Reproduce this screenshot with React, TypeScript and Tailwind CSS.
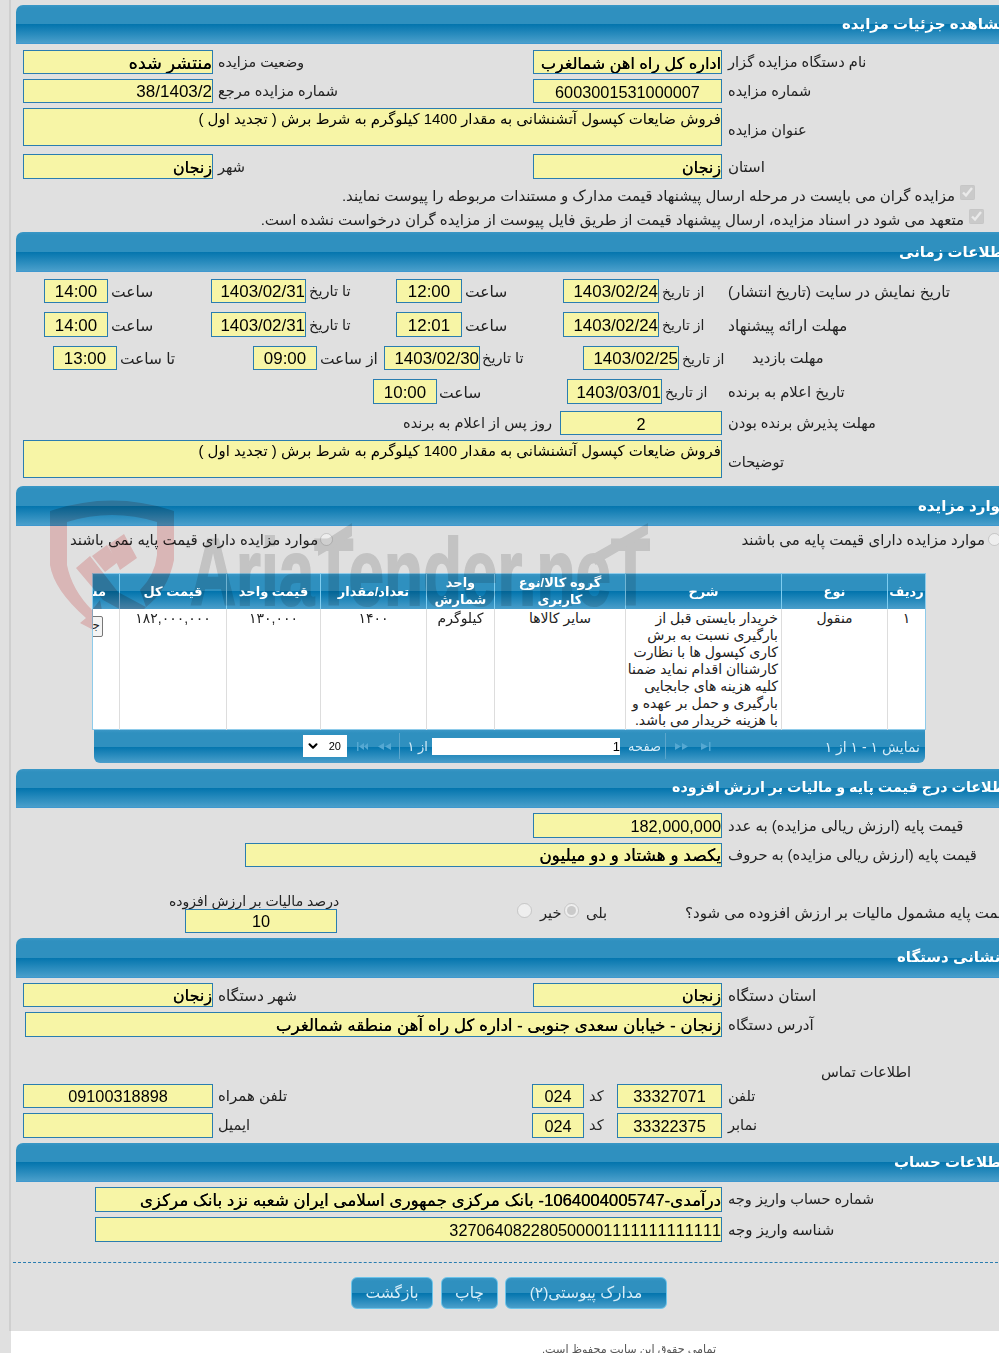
import React from "react";
import { ChevronDown } from "lucide-react";

const grad =
  "bg-[linear-gradient(to_bottom,#3a97c6_0px,#2f90bf_3px,#2f90bf_50%,#0274ad_50%,#4a9fcb_100%)]";

function Header({ title, offset, h = "h-[40px]", size = "text-[15px]" }: { title: string; offset: string; h?: string; size?: string }) {
  return (
    <div className={`${grad} ${h} w-[1100px] rounded-tl-[7px] flex items-center border-b border-[#3f98cf]`}>
      <div dir="rtl" className={`${offset} ${size} pt-[1px] relative z-20 text-white font-bold whitespace-nowrap`}>
        {title}
      </div>
    </div>
  );
}

function Box({ className = "", children, size = "text-[16.7px]" }: { className?: string; children?: React.ReactNode; size?: string }) {
  return (
    <div
      dir="rtl"
      className={`h-full shrink-0 bg-[#f7f5a6] border border-[#2a7db0] pt-[3px] text-black ${size} [text-shadow:0.25px_0_0_#000] whitespace-nowrap overflow-hidden flex items-center justify-start ${className}`}
    >
      {children}
    </div>
  );
}

function Num({ className = "", children, center = true, size = "text-[16.3px]" }: { className?: string; children?: React.ReactNode; center?: boolean; size?: string }) {
  return (
    <div
      className={`h-full shrink-0 bg-[#f7f5a6] border border-[#2a7db0] pt-[2px] text-black ${size} [font-kerning:none] whitespace-nowrap overflow-hidden flex items-center ${center ? "justify-center" : "justify-end"} ${className}`}
    >
      {children}
    </div>
  );
}

function Label({ className = "", children }: { className?: string; children?: React.ReactNode }) {
  return (
    <div dir="rtl" className={`shrink-0 flex items-center justify-end whitespace-nowrap pt-[2px] text-[#222] ${className}`}>
      {children}
    </div>
  );
}

function Area({ className = "", children }: { className?: string; children?: React.ReactNode }) {
  return (
    <div dir="rtl" className={`h-full shrink-0 bg-[#f7f5a6] border border-[#2a7db0] text-black text-[14.95px] leading-[20px] whitespace-nowrap overflow-hidden ${className}`}>
      {children}
    </div>
  );
}

function Nav({ d, className = "" }: { d: string; className?: string }) {
  return (
    <svg width="16" height="9" viewBox="0 0 16 9" className={`shrink-0 ${className}`}>
      <path d={d} fill="#55a8d2" />
    </svg>
  );
}

const th = "relative z-20 border-l border-[#7fcdf0] last:border-l-0 text-white font-bold text-[13px] leading-[17px] text-center align-middle p-0";
const td = "relative z-20 bg-white border-l border-[#dddddd] last:border-l-0 align-top text-center text-[14px] leading-[17px] text-[#222] pt-[1px]";
const dt = "text-[16.9px]";

export default function App() {
  return (
    <div className="relative isolate w-[999px] h-[1353px] overflow-hidden bg-[#e0e0e0] flex text-[14.6px] font-['Liberation_Sans','DejaVu_Sans',sans-serif]">
      <div className="w-[11px] shrink-0 h-[1331px] border-r-2 border-[#cfcfcf]" />
      <div className="w-[988px] shrink-0 flex flex-col">
        <div className="pl-[5px] pt-[5px] flex flex-col h-[1331px]">
          <Header title="مشاهده جزئیات مزایده" offset="ml-[826px]" h="h-[39px]" />
          <div className="flex h-[24px] mt-[6px]">
            <Box size="text-[17.6px]" className="ml-[7px] w-[190px]">منتشر شده</Box>
            <Label className="ml-[5px] w-[315px] text-[14.2px]">وضعیت مزایده</Label>
            <Box size="text-[16.1px]" className="w-[189px]">اداره کل راه اهن شمالغرب</Box>
            <Label className="ml-[6px]">نام دستگاه مزایده گزار</Label>
          </div>
          <div className="flex h-[24px] mt-[5px]">
            <Num size="text-[17px]" center={false} className="ml-[7px] w-[190px]">38/1403/2</Num>
            <Label className="ml-[5px] w-[315px]">شماره مزایده مرجع</Label>
            <Num className="w-[189px]">6003001531000007</Num>
            <Label className="ml-[6px]">شماره مزایده</Label>
          </div>
          <div className="flex h-[38px] mt-[5px]">
            <Area className="ml-[7px] w-[699px]">فروش ضایعات کپسول آتشنشانی به مقدار 1400 کیلوگرم به شرط برش ( تجدید اول )</Area>
            <Label className="ml-[6px] pt-[7px]">عنوان مزایده</Label>
          </div>
          <div className="flex h-[25px] mt-[8px]">
            <Box size="text-[16px]" className="ml-[7px] w-[190px]">زنجان</Box>
            <Label className="ml-[5px] w-[315px]">شهر</Label>
            <Box size="text-[16px]" className="w-[189px]">زنجان</Box>
            <Label className="ml-[6px] text-[15px]">استان</Label>
          </div>
          <div className="flex justify-end items-center w-[959px] h-[20px] mt-[6px] gap-[5px]">
            <Label className="text-[15px]">مزایده گران می بایست در مرحله ارسال پیشنهاد قیمت مدارک و مستندات مربوطه را پیوست نمایند.</Label>
            <input type="checkbox" checked disabled readOnly className="w-[15px] h-[15px] m-0 -mt-[6px]" />
          </div>
          <div className="flex justify-end items-center w-[968px] h-[20px] mt-[4px] gap-[5px]">
            <Label className="text-[15.05px]">متعهد می شود در اسناد مزایده، ارسال پیشنهاد قیمت از طریق فایل پیوست از مزایده گران درخواست نشده است.</Label>
            <input type="checkbox" checked disabled readOnly className="w-[15px] h-[15px] m-0 -mt-[6px]" />
          </div>
          <div className="mt-[3px]" />

          <Header title="اطلاعات زمانی" offset="ml-[883px]" />
          <div className="flex h-[24px] mt-[7px]">
            <Num size={dt} className="ml-[28px] w-[64px]">14:00</Num>
            <Label className="ml-[3px] w-[100px] text-[15.5px]">ساعت</Label>
            <Num size={dt} center={false} className="w-[95px]">1403/02/31</Num>
            <Label className="ml-[3px] w-[87px]">تا تاریخ</Label>
            <Num size={dt} className="w-[66px]">12:00</Num>
            <Label className="ml-[3px] w-[98px] text-[15.5px]">ساعت</Label>
            <Num size={dt} center={false} className="w-[96px]">1403/02/24</Num>
            <Label className="ml-[3px] w-[66px] text-[14px]">از تاریخ</Label>
            <Label className="text-[15.2px]">تاریخ نمایش در سایت (تاریخ انتشار)</Label>
          </div>
          <div className="flex h-[25px] mt-[9px]">
            <Num size={dt} className="ml-[28px] w-[64px]">14:00</Num>
            <Label className="ml-[3px] w-[100px] text-[15.5px]">ساعت</Label>
            <Num size={dt} center={false} className="w-[95px]">1403/02/31</Num>
            <Label className="ml-[3px] w-[87px]">تا تاریخ</Label>
            <Num size={dt} className="w-[66px]">12:01</Num>
            <Label className="ml-[3px] w-[98px] text-[15.5px]">ساعت</Label>
            <Num size={dt} center={false} className="w-[96px]">1403/02/24</Num>
            <Label className="ml-[3px] w-[66px] text-[14px]">از تاریخ</Label>
            <Label className="text-[15.5px]">مهلت ارائه پیشنهاد</Label>
          </div>
          <div className="flex h-[24px] mt-[9px]">
            <Num size={dt} className="ml-[37px] w-[64px]">13:00</Num>
            <Label className="ml-[3px] w-[133px] text-[15.4px]">تا ساعت</Label>
            <Num size={dt} className="w-[64px]">09:00</Num>
            <Label className="ml-[3px] w-[64px] text-[15.4px]">از ساعت</Label>
            <Num size={dt} center={false} className="w-[96px]">1403/02/30</Num>
            <Label className="ml-[2px] w-[101px]">تا تاریخ</Label>
            <Num size={dt} center={false} className="w-[96px]">1403/02/25</Num>
            <Label className="ml-[3px] w-[46px] text-[14px]">از تاریخ</Label>
            <Label className="ml-[24px]">مهلت بازدید</Label>
          </div>
          <div className="flex h-[25px] mt-[9px]">
            <Num size={dt} className="ml-[357px] w-[64px]">10:00</Num>
            <Label className="ml-[2px] w-[128px] text-[15.5px]">ساعت</Label>
            <Num size={dt} center={false} className="w-[95px]">1403/03/01</Num>
            <Label className="ml-[3px] w-[63px] text-[14px]">از تاریخ</Label>
            <Label className="text-[14.8px]">تاریخ اعلام به برنده</Label>
          </div>
          <div className="flex h-[24px] mt-[7px]">
            <Label className="ml-[387px] w-[148px]">روز پس از اعلام به برنده</Label>
            <Num className="ml-[9px] w-[162px]">2</Num>
            <Label className="ml-[6px]">مهلت پذیرش برنده بودن</Label>
          </div>
          <div className="flex h-[38px] mt-[5px]">
            <Area className="ml-[7px] w-[699px]">فروش ضایعات کپسول آتشنشانی به مقدار 1400 کیلوگرم به شرط برش ( تجدید اول )</Area>
            <Label className="ml-[6px] pt-[7px]">توضیحات</Label>
          </div>
          <div className="mt-[8px]" />

          <Header title="موارد مزایده" offset="ml-[902px]" />
          <div className="flex h-[17px] mt-[5px] items-center">
            <Label className="ml-[54px] w-[248px] text-[15px]">موارد مزایده دارای قیمت پایه نمی باشند</Label>
            <input type="radio" disabled className="ml-[2px] w-[15px] h-[15px] m-0" />
            <Label className="w-[652px] text-[15px] justify-start!">موارد مزایده دارای قیمت پایه می باشند</Label>
            <input type="radio" disabled className="ml-[3px] w-[15px] h-[15px] m-0" />
          </div>
          <div className="ml-[76px] mt-[25px] w-[833px]">
            <table dir="rtl" className="table-fixed border-collapse w-[833px] border border-[#8ecbea]">
              <colgroup>
                <col className="w-[38px]" />
                <col className="w-[106px]" />
                <col className="w-[156px]" />
                <col className="w-[131px]" />
                <col className="w-[68px]" />
                <col className="w-[106px]" />
                <col className="w-[94px]" />
                <col className="w-[107px]" />
                <col className="w-[27px]" />
              </colgroup>
              <thead>
                <tr className={`${grad} h-[35px]`}>
                  <th className={th}>ردیف</th>
                  <th className={th}>نوع</th>
                  <th className={th}>شرح</th>
                  <th className={th}>گروه کالا/نوع<br />کاربری</th>
                  <th className={th}>واحد<br />شمارش</th>
                  <th className={th}>تعداد/مقدار</th>
                  <th className={th}>قیمت واحد</th>
                  <th className={th}>قیمت کل</th>
                  <th className={th}>
                    <div className="overflow-hidden flex justify-end pl-0 pr-[13px] whitespace-nowrap" dir="ltr">
                      <span dir="rtl" className="shrink-0">مشاهده</span>
                    </div>
                  </th>
                </tr>
              </thead>
              <tbody>
                <tr className="h-[120px]">
                  <td className={td}>۱</td>
                  <td className={td}>منقول</td>
                  <td className={`${td} text-right pr-[3px] whitespace-nowrap overflow-hidden`}>
                    خریدار بایستی قبل از<br />بارگیری نسبت به برش<br />کاری کپسول ها با نظارت<br />کارشناان اقدام نماید ضمنا<br />کلیه هزینه های جابجایی<br />بارگیری و حمل بر عهده و<br />با هزینه خریدار می باشد.
                  </td>
                  <td className={td}>سایر کالاها</td>
                  <td className={td}>کیلوگرم</td>
                  <td className={td}>۱۴۰۰</td>
                  <td className={td}>۱۳۰,۰۰۰</td>
                  <td className={td}>۱۸۲,۰۰۰,۰۰۰</td>
                  <td className={td}>
                    <div dir="ltr" className="overflow-hidden flex justify-end pr-[16px] pt-[6px]">
                      <div dir="rtl" className="shrink-0 w-[60px] h-[21px] border border-[#777] rounded-[2px] text-[12px] bg-[#f4f4f4] text-right pr-[2px]">جزئیات</div>
                    </div>
                  </td>
                </tr>
              </tbody>
            </table>
          </div>
          <div className={`${grad} ml-[78px] w-[831px] h-[33px] rounded-b-[6px] flex items-center text-[13px] text-[#d5ecf8]`}>
            <div className="ml-[209px] w-[44px] h-[22px] bg-white flex items-center justify-between px-[3px] text-black text-[11px] shrink-0">
              <ChevronDown size={14} strokeWidth={3.5} />
              <span className="pr-[3px]">20</span>
            </div>
            <Nav className="ml-[9px]" d="M1 0h1.5v9H1zM3 4.5 8 1v7z M8 4.5 12 1v7z" />
            <Nav className="ml-[5px]" d="M1 4.5 7 1v7zM8 4.5 14 1v7z" />
            <div className="ml-[6px] w-px h-[26px] bg-[#5ba6cc] shrink-0" />
            <div dir="rtl" className="ml-[6px] w-[22px] whitespace-nowrap pt-[2px]">از ۱</div>
            <div dir="rtl" className="ml-[4px] w-[188px] h-[17px] bg-white text-black text-[13px] leading-[17px] text-right shrink-0">1</div>
            <div dir="rtl" className="ml-[5px] w-[36px] whitespace-nowrap pt-[2px]">صفحه</div>
            <div className="ml-[4px] w-px h-[26px] bg-[#5ba6cc] shrink-0" />
            <Nav className="ml-[8px]" d="M1 1l6 3.5L1 8zM8 1l6 3.5L8 8z" />
            <Nav className="ml-[9px]" d="M2 1l7 3.5L2 8zM10 0h1.5v9H10z" />
            <div dir="rtl" className="ml-[107px] w-[98px] whitespace-nowrap text-right text-[14px] pt-[2px]">نمایش ۱ - ۱ از ۱</div>
          </div>
          <div className="mt-[6px]" />

          <Header title="اطلاعات درج قیمت پایه و مالیات بر ارزش افزوده" offset="ml-[656px]" h="h-[39px]" size="text-[14.3px]" />
          <div className="flex h-[25px] mt-[5px]">
            <Num center={false} className="ml-[517px] w-[189px]">182,000,000</Num>
            <Label className="ml-[6px] text-[14.9px]">قیمت پایه (ارزش ریالی مزایده) به عدد</Label>
          </div>
          <div className="flex h-[24px] mt-[5px]">
            <Box size="text-[17px]" className="ml-[229px] w-[477px]">یکصد و هشتاد و دو میلیون</Box>
            <Label className="ml-[6px] text-[14.7px]">قیمت پایه (ارزش ریالی مزایده) به حروف</Label>
          </div>
          <div className="flex h-[40px] mt-[26px]">
            <div className="ml-[153px] w-[168px] flex flex-col shrink-0">
              <Label className="h-[16px] text-[14px]">درصد مالیات بر ارزش افزوده</Label>
              <div className="ml-[16px] w-[152px] h-[24px]">
                <Num className="w-[152px]">10</Num>
              </div>
            </div>
            <div className="flex items-center h-[24px] mt-[8px]">
              <input type="radio" disabled className="ml-[180px] w-[15px] h-[15px] m-0 -mt-[5px]" />
              <Label className="ml-[8px] w-[22px]">خیر</Label>
              <input type="radio" checked disabled readOnly className="ml-[2px] w-[15px] h-[15px] m-0 -mt-[5px]" />
              <Label className="ml-[7px] w-[24px]">بلی</Label>
              <Label className="ml-[75px] text-[15px]">قیمت پایه مشمول مالیات بر ارزش افزوده می شود؟</Label>
            </div>
          </div>
          <div className="mt-[5px]" />

          <Header title="نشانی دستگاه" offset="ml-[881px]" />
          <div className="flex h-[24px] mt-[5px]">
            <Box size="text-[16px]" className="ml-[7px] w-[190px]">زنجان</Box>
            <Label className="ml-[5px] w-[315px] text-[15.5px]">شهر دستگاه</Label>
            <Box size="text-[16px]" className="w-[189px]">زنجان</Box>
            <Label className="ml-[6px] text-[15.5px]">استان دستگاه</Label>
          </div>
          <div className="flex h-[25px] mt-[5px]">
            <Box className="ml-[9px] w-[697px]">زنجان - خیابان سعدی جنوبی - اداره کل راه آهن منطقه شمالغرب</Box>
            <Label className="ml-[6px] text-[15.1px]">آدرس دستگاه</Label>
          </div>
          <div className="ml-[805px] mt-[26px] h-[18px] flex items-center">
            <Label>اطلاعات تماس</Label>
          </div>
          <div className="flex h-[24px] mt-[3px]">
            <Num className="ml-[7px] w-[190px]">09100318898</Num>
            <Label className="ml-[5px] w-[314px] text-[15px]">تلفن همراه</Label>
            <Num className="w-[52px]">024</Num>
            <Label className="ml-[5px] w-[28px]">کد</Label>
            <Num className="w-[105px]">33327071</Num>
            <Label className="ml-[6px]">تلفن</Label>
          </div>
          <div className="flex h-[25px] mt-[5px]">
            <Num className="ml-[7px] w-[190px]" />
            <Label className="ml-[5px] w-[314px]">ایمیل</Label>
            <Num className="w-[52px]">024</Num>
            <Label className="ml-[5px] w-[28px]">کد</Label>
            <Num className="w-[105px]">33322375</Num>
            <Label className="ml-[6px]">نمابر</Label>
          </div>
          <div className="mt-[5px]" />

          <Header title="اطلاعات حساب" offset="ml-[878px]" h="h-[39px]" />
          <div className="flex h-[25px] mt-[5px]">
            <Box className="ml-[79px] w-[627px]">درآمدی-1064004005747- بانک مرکزی جمهوری اسلامی ایران شعبه نزد بانک مرکزی</Box>
            <Label className="ml-[6px]">شماره حساب واریز وجه</Label>
          </div>
          <div className="flex h-[25px] mt-[5px]">
            <Num center={false} className="ml-[79px] w-[627px]">327064082280500001111111111111</Num>
            <Label className="ml-[6px] text-[15px]">شناسه واریز وجه</Label>
          </div>
          <div className="w-[990px] -ml-[3px] mt-[20px] border-t border-dashed border-[#2a7db0]" />
          <div className="flex h-[32px] mt-[14px] ml-[335px] gap-[8px] text-[15.5px] text-[#d8eef8]">
            <div className={`${grad} w-[82px] rounded-[6px] border border-[#6cc4ea] flex items-center justify-center`}>بازگشت</div>
            <div className={`${grad} w-[57px] rounded-[6px] border border-[#6cc4ea] flex items-center justify-center`}>چاپ</div>
            <div dir="rtl" className={`${grad} w-[162px] -ml-[1px] rounded-[6px] border border-[#6cc4ea] flex items-center justify-center`}>مدارک پیوستی(۲)</div>
          </div>
        </div>
        <div className="h-[22px] bg-white flex items-end">
          <div dir="rtl" className="ml-[531px] text-[11.2px] leading-[14px] text-[#555] whitespace-nowrap -mb-[3px]">تمامی حقوق این سایت محفوظ است.</div>
        </div>
      </div>

      <svg viewBox="0 0 999 1353" className="absolute left-0 top-0 w-[999px] h-[1353px] z-10 mix-blend-multiply pointer-events-none">
        <path d="M50 511Q112 490 174 511V560Q168 590 146 607L140 590Q155 575 157 555V522Q112 508 67 522V565Q72 590 92 610L100 600L107 637L80 623L86 618Q54 590 50 565Z" fill="#f7cfcf" />
        <path d="M76 568L90 556L118 592L146 607L136 618L103 600Z" fill="#f7cfcf" />
        <path d="M92 556L107 545L118 562L105 572Z" fill="#f7cfcf" />
        <path d="M108 545L124 534L137 558L120 570Z" fill="#f7cfcf" />
        <g fill="#dedede">
          <text x="190" y="605" fontSize="95" fontWeight="700" textLength="460" lengthAdjust="spacingAndGlyphs" stroke="#dedede" strokeWidth="2" fontFamily="Liberation Sans, sans-serif">AriaTender.neT</text>
          <path d="M318 545L352 523V536L318 556Z" />
          <path d="M595 553L648 523V534L595 565Z" />
        </g>
      </svg>
    </div>
  );
}
